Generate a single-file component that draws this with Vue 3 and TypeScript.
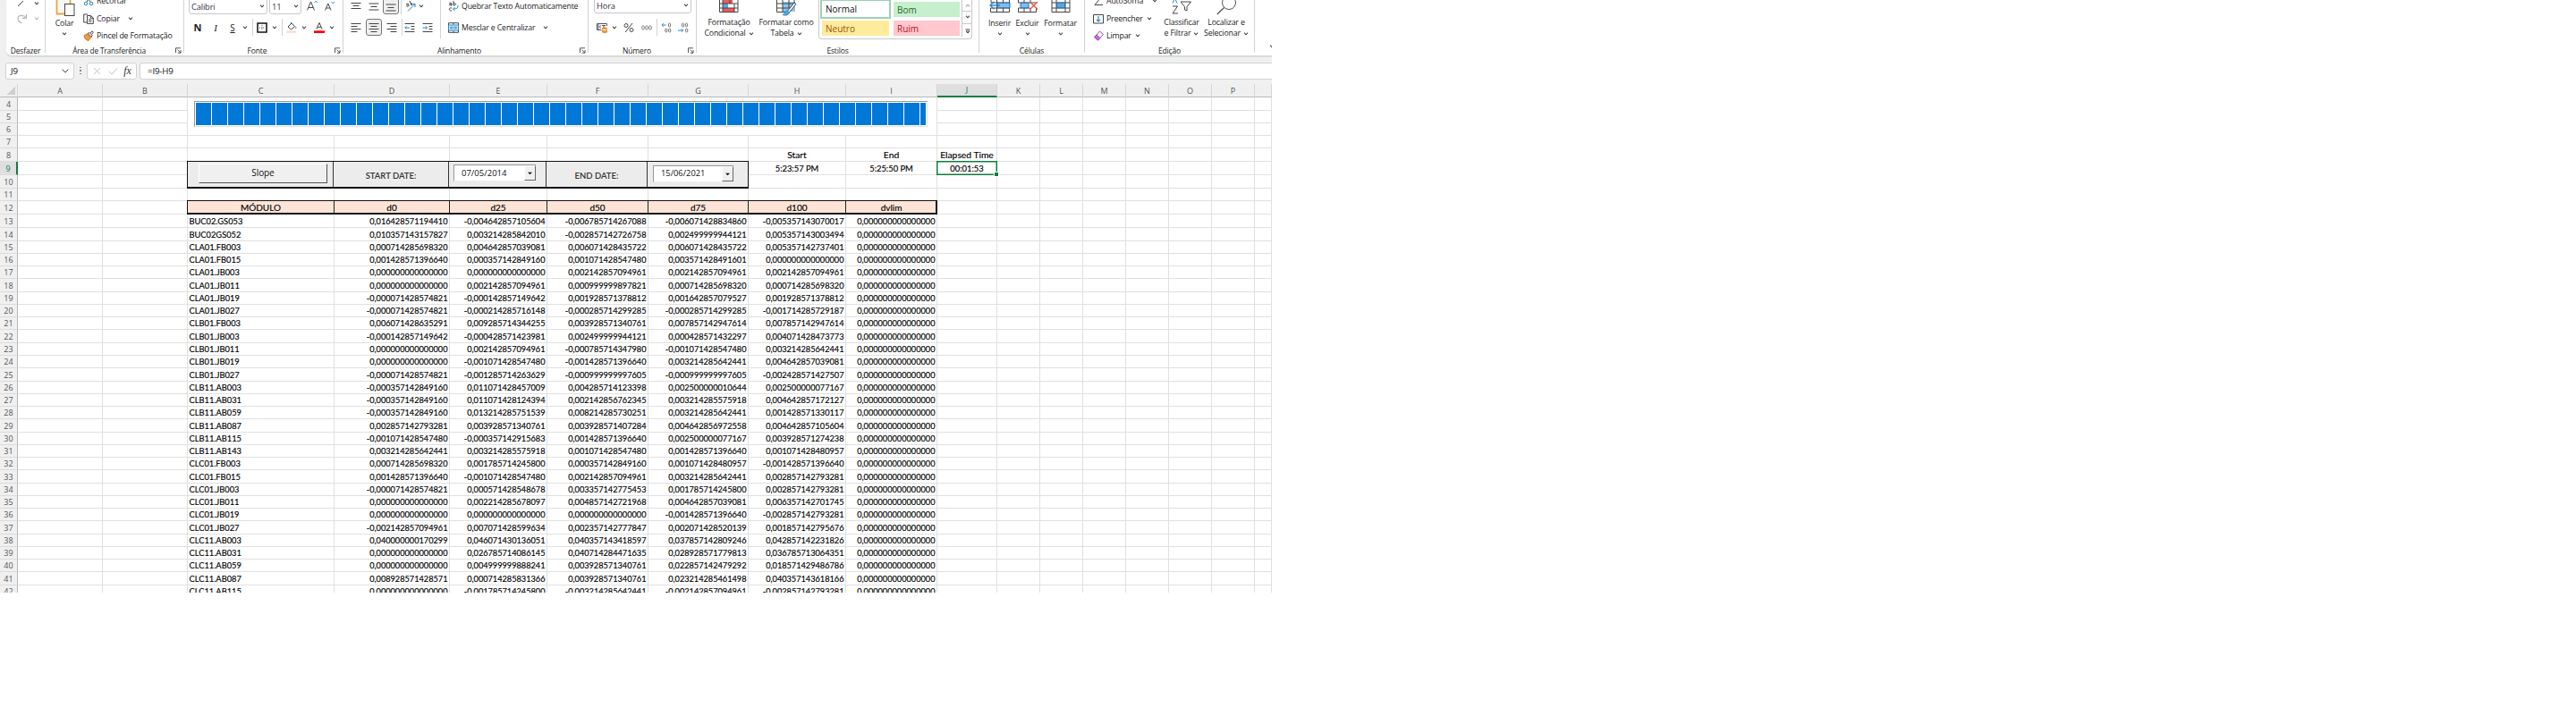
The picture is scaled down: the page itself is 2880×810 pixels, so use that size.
<script setup lang="ts">
import { h } from 'vue'

const Chevron = () => h('svg', { class: 'chevron', viewBox: '0 0 6 4' }, [h('path', { d: 'M1 .7 3 2.8 5 .7' })])
const Launcher = () => h('svg', { class: 'launcher', viewBox: '0 0 7 7' }, [h('path', { d: 'M.5 6V.8H6M2.5 2.7 6 6M6 3v3.2H2.8' })])

const columns = [
  { name: '', width: 20 },
  { name: 'A', width: 95 },
  { name: 'B', width: 95 },
  { name: 'C', width: 164 },
  { name: 'D', width: 129 },
  { name: 'E', width: 109 },
  { name: 'F', width: 113 },
  { name: 'G', width: 112 },
  { name: 'H', width: 109 },
  { name: 'I', width: 102 },
  { name: 'J', width: 67 },
  { name: 'K', width: 48 },
  { name: 'L', width: 48 },
  { name: 'M', width: 48 },
  { name: 'N', width: 48 },
  { name: 'O', width: 48 },
  { name: 'P', width: 48 },
  { name: '', width: 19 },
]

const firstRow = 4
const headHeights = [15, 14, 14, 14, 15, 15, 15, 14, 15, 15]
const rowHeights = [...headHeights]
for (let i = 1; i <= 29; i++) {
  rowHeights.push(Math.round(254.4 + i * 14.26) - Math.round(254.4 + (i - 1) * 14.26))
}
const rowNumbers = rowHeights.map((_, i) => i + firstRow)

const gridStyle = {
  gridTemplateColumns: columns.map((c) => c.width + 'px').join(' '),
  gridTemplateRows: '15px ' + rowHeights.map((v) => v + 'px').join(' '),
}

const Z = '0,000000000000000'
const data: string[][] = [
  ['BUC02.GS053', '0,016428571194410', '-0,004642857105604', '-0,006785714267088', '-0,006071428834860', '-0,005357143070017'],
  ['BUC02GS052', '0,010357143157827', '0,003214285842010', '-0,002857142726758', '0,002499999944121', '0,005357143003494'],
  ['CLA01.FB003', '0,000714285698320', '0,004642857039081', '0,006071428435722', '0,006071428435722', '0,005357142737401'],
  ['CLA01.FB015', '0,001428571396640', '0,000357142849160', '0,001071428547480', '0,003571428491601', Z],
  ['CLA01.JB003', Z, Z, '0,002142857094961', '0,002142857094961', '0,002142857094961'],
  ['CLA01.JB011', Z, '0,002142857094961', '0,000999999897821', '0,000714285698320', '0,000714285698320'],
  ['CLA01.JB019', '-0,000071428574821', '-0,000142857149642', '0,001928571378812', '0,001642857079527', '0,001928571378812'],
  ['CLA01.JB027', '-0,000071428574821', '-0,000214285716148', '-0,000285714299285', '-0,000285714299285', '-0,001714285729187'],
  ['CLB01.FB003', '0,006071428635291', '0,009285714344255', '0,003928571340761', '0,007857142947614', '0,007857142947614'],
  ['CLB01.JB003', '-0,000142857149642', '-0,000428571423981', '0,002499999944121', '0,000428571432297', '0,004071428473773'],
  ['CLB01.JB011', Z, '0,002142857094961', '-0,000785714347980', '-0,001071428547480', '0,003214285642441'],
  ['CLB01.JB019', Z, '-0,001071428547480', '-0,001428571396640', '0,003214285642441', '0,004642857039081'],
  ['CLB01.JB027', '-0,000071428574821', '-0,001285714263629', '-0,000999999997605', '-0,000999999997605', '-0,002428571427507'],
  ['CLB11.AB003', '-0,000357142849160', '0,011071428457009', '0,004285714123398', '0,002500000010644', '0,002500000077167'],
  ['CLB11.AB031', '-0,000357142849160', '0,011071428124394', '0,002142856762345', '0,003214285575918', '0,004642857172127'],
  ['CLB11.AB059', '-0,000357142849160', '0,013214285751539', '0,008214285730251', '0,003214285642441', '0,001428571330117'],
  ['CLB11.AB087', '0,002857142793281', '0,003928571340761', '0,003928571407284', '0,004642856972558', '0,004642857105604'],
  ['CLB11.AB115', '-0,001071428547480', '-0,000357142915683', '0,001428571396640', '0,002500000077167', '0,003928571274238'],
  ['CLB11.AB143', '0,003214285642441', '0,003214285575918', '0,001071428547480', '0,001428571396640', '0,001071428480957'],
  ['CLC01.FB003', '0,000714285698320', '0,001785714245800', '0,000357142849160', '0,001071428480957', '-0,001428571396640'],
  ['CLC01.FB015', '0,001428571396640', '-0,001071428547480', '0,002142857094961', '0,003214285642441', '0,002857142793281'],
  ['CLC01.JB003', '-0,000071428574821', '0,000571428548678', '0,003357142775453', '0,001785714245800', '0,002857142793281'],
  ['CLC01.JB011', Z, '0,002214285678097', '0,004857142721968', '0,004642857039081', '0,006357142701745'],
  ['CLC01.JB019', Z, Z, Z, '-0,001428571396640', '-0,002857142793281'],
  ['CLC01.JB027', '-0,002142857094961', '0,007071428599634', '0,002357142777847', '0,002071428520139', '0,001857142795676'],
  ['CLC11.AB003', '0,040000000170299', '0,046071430136051', '0,040357143418597', '0,037857142809246', '0,042857142231826'],
  ['CLC11.AB031', Z, '0,026785714086145', '0,040714284471635', '0,028928571779813', '0,036785713064351'],
  ['CLC11.AB059', Z, '0,004999999888241', '0,003928571340761', '0,022857142479292', '0,018571429486786'],
  ['CLC11.AB087', '0,008928571428571', '0,000714285831366', '0,003928571340761', '0,023214285461498', '0,040357143618166'],
  ['CLC11.AB115', Z, '-0,001785714245800', '-0,003214285642441', '-0,002142857094961', '-0,002857142793281'],
]

const headings = ['MÓDULO', 'd0', 'd25', 'd50', 'd75', 'd100', 'dvlim']
const loose: Record<string, string> = {
  '8-8': 'Start', '8-9': 'End', '8-10': 'Elapsed Time',
  '9-8': '5:23:57 PM', '9-9': '5:25:50 PM', '9-10': '00:01:53',
}

interface Cell { key: string; text: string; kind: string; style: { gridRow: number; gridColumn: number } }
const cells: Cell[] = []
for (const row of rowNumbers) {
  for (let c = 1; c < columns.length; c++) {
    if (row <= 6 && c >= 3 && c <= 9) continue
    if ((row === 9 || row === 10) && c >= 3 && c <= 7) continue
    let text = ''
    let kind = 'plain'
    if (row === 12 && c >= 3 && c <= 9) {
      text = headings[c - 3]
      kind = 'heading'
    } else if (row >= 13 && c >= 3 && c <= 9) {
      text = c === 9 ? Z : data[row - 13][c - 3]
      kind = c === 3 ? 'code' : 'number'
    } else {
      text = loose[row + '-' + c] ?? ''
      if (row === 8) kind = 'title'
    }
    cells.push({ key: row + '-' + c, text, kind, style: { gridRow: row - 2, gridColumn: c + 1 } })
  }
}
</script>

<template>
  <main class="window">
    <section class="ribbon">
      <div class="group undo">
        <div class="body undo-body">
          <svg class="i-undo" viewBox="0 0 14 8"><path d="M2 7 8 1" /></svg><Chevron />
          <svg class="i-redo" viewBox="0 0 14 12"><path d="M11.5 1v4.3H7M11.2 5C8 .8 2 2 2 6c0 2.500 2 3.500 4.500 5" /></svg><Chevron class="faded" />
        </div>
        <div class="caption"><span>Desfazer</span></div>
      </div>

      <div class="group clipboard">
        <div class="body clip-body">
          <div class="big paste">
            <svg class="i-paste" viewBox="0 0 22 20"><path d="M1.500 0v15.500h9M16.500 0v4" fill="none" stroke="#e8a33d" stroke-width="1.800" /><path d="M3 0h11v4h-4v10H3z" fill="#f7f7f7" /><rect x="10.500" y="4.500" width="10.500" height="13" fill="#fff" stroke="#444" /></svg>
            <span>Colar</span><Chevron />
          </div>
          <div class="stack">
            <div class="line"><svg class="ic" viewBox="0 0 12 12"><path d="M3.500 0 8 7M8.500 0 4 7" stroke="#444" /><circle cx="3" cy="9" r="1.800" stroke="#2b88c8" /><circle cx="9" cy="9" r="1.800" stroke="#2b88c8" /></svg><span>Recortar</span></div>
            <div class="line"><svg class="ic" viewBox="0 0 12 12"><path d="M5 10H.7V1H5M4.500 2.500h4L11.300 5v6.400H4.500zM8.300 2.500v2.800h3M6 7h3.500M6 9h3.500" stroke="#444" /></svg><span>Copiar</span><Chevron class="gap" /></div>
            <div class="line"><svg class="ic" viewBox="0 0 12 12"><path d="M1 5.500 5 4l3.500 3.500L6 11.500C3 11 1.500 9 1 5.500z" fill="#f09a3e" stroke="#d9731a" /><path d="m5 3.500 2-1 3 3-1 2zM8 3l2-2.200 1.300 1.300L9.500 4.500" fill="#fff" stroke="#444" /></svg><span>Pincel de Formatação</span></div>
          </div>
        </div>
        <div class="caption"><span>Área de Transferência</span><Launcher /></div>
      </div>

      <div class="group font">
        <div class="body">
          <div class="tools font-top">
            <div class="combo">Calibri<Chevron /></div>
            <div class="combo">11<Chevron /></div>
            <svg class="i-grow" viewBox="0 0 14 14"><path d="M1.500 12.500 5.500 3l4 9.500M3 9.500h5" stroke="#444" /><path d="m9.500 4 1.700-1.800L13 4" stroke="#2b88c8" /></svg>
            <svg class="i-grow" viewBox="0 0 14 14"><path d="M2.500 12.500 5.800 5l3.300 7.500M4 10h4" stroke="#444" /><path d="m9.500 3 1.700 1.800L13 3" stroke="#2b88c8" /></svg>
          </div>
          <div class="tools font-bottom">
            <b>N</b><i>I</i><u>S</u><Chevron /><em class="rule" />
            <svg class="ic" viewBox="0 0 12 12"><path d="M1 1h10v10H1z" stroke="#111" stroke-width="1.500" /><path d="M6 3v6M3 6h6" stroke="#666" stroke-dasharray="1 1" /></svg><Chevron /><em class="rule" />
            <svg class="ic" viewBox="0 0 12 12"><path d="m2 5 4-4 3.500 3.500L5.500 8zM5 0l1.500 2" fill="#fff" stroke="#444" /><path d="M10 4.500c1.500 1 .8 2.500.3 2.500" stroke="#2b88c8" /><path d="M.5 9.500h11v2.300H.5z" fill="#fbdcc9" stroke="none" /></svg><Chevron />
            <svg class="ic" viewBox="0 0 12 12"><path d="m2.800 7.500 3.200-7 3.200 7M4 5.300h4" stroke="#444" /><path d="M0 9.300h12v2.700H0z" fill="#f00" stroke="none" /></svg><Chevron />
          </div>
        </div>
        <div class="caption"><span>Fonte</span><Launcher /></div>
      </div>

      <div class="group align">
        <div class="body align-body">
          <div class="align-left">
            <div class="tools align-top">
              <svg class="ic" viewBox="0 0 12 12"><path d="M.5 2.500h11M2.500 5.500h7M.5 8.500h11" stroke="#444" /></svg>
              <svg class="ic" viewBox="0 0 12 12"><path d="M.5 3h11M2.500 6.500h7M.5 10h11" stroke="#444" /></svg>
              <span class="pressed"><svg class="ic" viewBox="0 0 12 12"><path d="M.5 4h11M2.500 7.500h7M.5 11h11" stroke="#444" /></svg></span>
              <em class="rule" />
              <svg class="ic" viewBox="0 0 12 12"><path d="M1 4c2-2 3-1 3 2M3.500 4C1 4 1 7 3.500 6M5 0l2 5M6 3c2-1 3 1 1 2" stroke="#444" /><path d="M3 11.500 11 3.500M11 7V3.500H7.500" stroke="#2b88c8" /></svg><Chevron />
            </div>
            <div class="tools align-bottom">
              <svg class="ic" viewBox="0 0 12 12"><path d="M.5 1.500h11M.5 4.500h7M.5 7.500h11M.5 10.500h7" stroke="#444" /></svg>
              <span class="pressed"><svg class="ic" viewBox="0 0 12 12"><path d="M.5 1.500h11M2.500 4.500h7M.5 7.500h11M2.500 10.500h7" stroke="#444" /></svg></span>
              <svg class="ic" viewBox="0 0 12 12"><path d="M.5 1.500h11M4.500 4.500h7M.5 7.500h11M4.500 10.500h7" stroke="#444" /></svg>
              <em class="rule" />
              <svg class="ic" viewBox="0 0 12 12"><path d="M.5 1.500h11M7.500 4.500h4M7.500 7.500h4M.5 10.500h11" stroke="#444" /><path d="M6 6H.8M2.500 4.300.8 6l1.700 1.700" stroke="#2b88c8" /></svg>
              <svg class="ic" viewBox="0 0 12 12"><path d="M.5 1.500h11M7.500 4.500h4M7.500 7.500h4M.5 10.500h11" stroke="#444" /><path d="M.5 6h5M4 4.300 5.700 6 4 7.700" stroke="#2b88c8" /></svg>
            </div>
          </div>
          <div class="align-right">
            <div class="line"><svg class="ic" viewBox="0 0 12 12"><path d="M1 2.500c2-1 3-.5 3 2.500M4 3.500C.5 3 .5 5.500 4 5M6 0v5M6 3c3-1.500 4 2 0 2M4 8C.5 7 .5 11.500 4 11" stroke="#444" /><path d="M11 5v1c0 2-1.500 3-5 3M7.500 7 5.500 9l2 2.300" stroke="#2b88c8" /></svg><span>Quebrar Texto Automaticamente</span></div>
            <div class="line"><svg class="ic" viewBox="0 0 12 12"><path d="M.5.7h11v10.600H.5zM6 .7v2M6 9.300v2" fill="#fff" stroke="#444" /><path d="M.5 3h11v6H.5z" fill="#cfe6f7" stroke="#2b88c8" /><path d="M2.500 6h7M4 4.500 2.500 6 4 7.500M8 4.500 9.500 6 8 7.500" stroke="#2b88c8" /></svg><span>Mesclar e Centralizar</span><Chevron class="gap" /></div>
          </div>
        </div>
        <div class="caption"><span>Alinhamento</span><Launcher /></div>
      </div>

      <div class="group num">
        <div class="body">
          <div class="combo wide">Hora<Chevron /></div>
          <div class="tools num-tools">
            <svg class="ic" viewBox="0 0 12 12"><path d="M11.500 4V1.500H.5v7h5M2 1.500v7M5 3.500c-2 1-2 2 0 3M6 3.500h4M8 3v3" stroke="#555" /><path d="M6.500 6.500c1.500-1 4-1 5 0V11c-1.500 1-4 1-5 0z" fill="#f09a3e" stroke="#d9731a" stroke-width=".7" /><path d="M6.500 8c1.500.8 4 .8 5 0" stroke="#fff" /></svg><Chevron />
            <svg class="ic" viewBox="0 0 12 12"><path d="M10 1 2 11" stroke="#444" /><circle cx="3" cy="3.500" r="2" stroke="#444" /><circle cx="9" cy="8.500" r="2" stroke="#444" /></svg>
            <svg class="ic" viewBox="0 0 12 12"><ellipse cx="2" cy="6" rx="1.400" ry="2.200" stroke="#888" /><ellipse cx="6" cy="6" rx="1.400" ry="2.200" stroke="#888" /><ellipse cx="10" cy="6" rx="1.400" ry="2.200" stroke="#888" /></svg>
            <em class="rule" />
            <svg class="ic" viewBox="0 0 12 12"><path d="M5.500 3H1M2.700 1.200 1 3l1.700 1.800" stroke="#2b88c8" /><ellipse cx="9.500" cy="3" rx="1.200" ry="2" stroke="#777" /><ellipse cx="5.800" cy="9" rx="1.200" ry="2" stroke="#777" /><ellipse cx="9.700" cy="9" rx="1.200" ry="2" stroke="#777" /></svg>
            <svg class="ic" viewBox="0 0 12 12"><path d="M0 9h5.500M4 7.200 5.700 9 4 10.800" stroke="#2b88c8" /><ellipse cx="5.500" cy="3" rx="1.200" ry="2" stroke="#777" /><ellipse cx="9.500" cy="3" rx="1.200" ry="2" stroke="#777" /><ellipse cx="9.700" cy="9" rx="1.200" ry="2" stroke="#777" /></svg>
          </div>
        </div>
        <div class="caption"><span>Número</span><Launcher /></div>
      </div>

      <div class="group styles">
        <div class="body styles-body">
          <div class="big cond">
            <svg class="i-table" viewBox="0 0 22 14"><path d="M.5 0h20v13.500H.5z" fill="#fff" stroke="none" /><path d="M4 0h11v4H4zM4 9h13v4.500H4z" fill="#f05a5a" stroke="none" /><path d="M4 4h6v5H4z" fill="#53a8e2" stroke="none" /><path d="M.5 0v13.500h20.500V0M.5 4H21M.5 9H21M4 0v13.500M12 0v4M17 4v9.500" stroke="#444" /></svg>
            <span>Formatação</span><span>Condicional <Chevron /></span>
          </div>
          <div class="big tbl">
            <svg class="i-table" viewBox="0 0 22 18"><path d="M7 2h14v11H7z" fill="#8cc5f0" stroke="none" /><path d="M.5 0v13.500h12M20 0v4M.5 4H21M.5 9H16M7 0v13.500M14 0v9" stroke="#444" /><path d="m12 13 8-10 2 1.500-8 10z" fill="#fff" stroke="#444" /><path d="M12 12c-3 0-2 4-5 4.500 4 1.500 7 0 7.500-2.500z" fill="#53a8e2" stroke="#2b88c8" /></svg>
            <span>Formatar como</span><span>Tabela <Chevron /></span>
          </div>
          <div class="gallery">
            <div class="swatch normal">Normal</div><div class="swatch good">Bom</div>
            <div class="swatch neutral">Neutro</div><div class="swatch bad">Ruim</div>
            <div class="spin"><span><Chevron class="up" /></span><span><Chevron /></span><span><svg class="i-more" viewBox="0 0 6 6"><path d="M.5 1h5M1 3l2 2 2-2z" /></svg></span></div>
          </div>
        </div>
        <div class="caption"><span>Estilos</span></div>
      </div>

      <div class="group cellsg">
        <div class="body cells-body">
          <div class="big"><svg class="i-cells" viewBox="0 0 24 14"><path d="M1.500 9v4.500h21V0M8.500 0v13.500M15.500 0v13.500M1.500 9h21M2 0v3h20" stroke="#444" /><path d="M9 3.200h14v5.600H9z" fill="#7dbdf0" stroke="#2b6fa8" /><path d="M12 6H1M5.500 1.800 1 6l4.500 4.200" stroke="#2b88c8" stroke-width="1.300" /></svg><span>Inserir</span><Chevron /></div>
          <div class="big"><svg class="i-cells" viewBox="0 0 24 14"><path d="M1.500 9v4.500h20V9M1.500 0v3h20M8 0v3M15 0v3M8 9v4.500M15 9v4.500M1.500 9h13" stroke="#444" /><path d="M4 3.200h9v5.600H4z" fill="#7dbdf0" stroke="#2b6fa8" /><path d="m14.500 2 8.500 8.500M23 2l-8.500 8.500" stroke="#e8503c" stroke-width="1.300" /></svg><span>Excluir</span><Chevron /></div>
          <div class="big"><svg class="i-cells" viewBox="0 0 24 14"><path d="M2 0v13.500h20V0M2 3h20M2 9h20M7 0v13.500M17 0v13.500" stroke="#444" /><path d="M7.500 3.200h9v5.600h-9z" fill="#53a8e2" stroke="#2b6fa8" /></svg><span>Formatar</span><Chevron /></div>
        </div>
        <div class="caption"><span>Células</span></div>
      </div>

      <div class="group edit">
        <div class="body edit-body">
          <div class="stack">
            <div class="line"><svg class="ic" viewBox="0 0 12 12"><path d="M10 0H2l4.500 5L2 10.500h9" stroke="#444" /></svg><span>AutoSoma</span><Chevron class="gap" /></div>
            <div class="line"><svg class="ic" viewBox="0 0 12 12"><path d="M.5 1.500h11v9.500H.5z" stroke="#444" /><path d="M6 3v6M3.800 6.800 6 9l2.200-2.200" stroke="#2b88c8" stroke-width="1.200" /></svg><span>Preencher</span><Chevron /></div>
            <div class="line"><svg class="ic" viewBox="0 0 12 12"><path d="m7.500 1 4 3.500-6 6.500-4-3.500z" fill="#fff" stroke="#a23cb0" /><path d="m4 5 4 3.500L5.500 11l-4-3.500z" fill="#c678d0" stroke="#a23cb0" /></svg><span>Limpar</span><Chevron /></div>
          </div>
          <div class="big sort">
            <svg class="i-find" viewBox="0 0 22 17"><path d="M1 3.500 3.500-2 6 3.500" stroke="#2b88c8" /><path d="M1 7h5.500L1 15h6" stroke="#444" /><path d="M10 2h11.500L17 7.500V12l-2.500-1V7.500z" stroke="#444" /></svg>
            <span>Classificar</span><span>e Filtrar <Chevron /></span>
          </div>
          <div class="big find">
            <svg class="i-find" viewBox="0 0 22 17"><circle cx="14" cy="3" r="7.500" stroke="#555" /><path d="M8.500 8.500.8 16" stroke="#555" stroke-width="1.300" /></svg>
            <span>Localizar e</span><span>Selecionar <Chevron /></span>
          </div>
        </div>
        <div class="caption"><span>Edição</span></div>
      </div>
      <div class="collapse"><Chevron /></div>
    </section>

    <section class="formula">
      <div class="box name"><span>J9</span><svg class="i-drop" viewBox="0 0 8 5"><path d="m.7.7 3.300 3.300L7.300.7" /></svg></div>
      <div class="dots"><i /><i /><i /></div>
      <div class="box actions">
        <svg viewBox="0 0 10 10"><path d="m1 1 8 8M9 1 1 9" stroke="#bbb" /></svg>
        <svg viewBox="0 0 12 10"><path d="m1 5.500 3.500 3.500L11 1.500" stroke="#bbb" /></svg>
        <span class="fx">fx</span>
      </div>
      <div class="box expr">=I9-H9</div>
    </section>

    <section class="sheet" :style="gridStyle">
      <div v-for="(c, i) in columns" :key="'h' + i" class="col-head" :class="{ corner: i === 0, active: c.name === 'J' }">{{ c.name }}</div>
      <div v-for="n in rowNumbers" :key="'r' + n" class="row-head" :class="{ active: n === 9 }" :style="{ gridRow: n - 2 }">{{ n }}</div>
      <div v-for="cell in cells" :key="cell.key" class="cell" :class="cell.kind" :style="cell.style">{{ cell.text }}</div>

      <div class="merged-progress">
        <div class="progress"><i v-for="n in 46" :key="n" /></div>
      </div>

      <div class="form">
        <div class="field"><button class="slope">Slope</button></div>
        <div class="field label">START DATE:</div>
        <div class="field"><div class="picker first"><span>07/05/2014</span><b><svg viewBox="0 0 6 4"><path d="M0 .5h6L3 3.500z" /></svg></b></div></div>
        <div class="field label">END DATE:</div>
        <div class="field"><div class="picker second"><span>15/06/2021</span><b><svg viewBox="0 0 6 4"><path d="M0 .5h6L3 3.500z" /></svg></b></div></div>
      </div>
      <div class="heading-frame" />
      <div class="selection"><i /></div>
    </section>
  </main>
</template>

<style>
body { margin: 0; background: #fff; }
</style>

<style scoped>
.window { width: 1422px; height: 663px; overflow: hidden; background: #f0f0f0; font-family: "Open Sans", "Noto Sans", sans-serif; font-size: 8.75px; letter-spacing: -0.15px; color: #222; }
svg { fill: none; flex: none; display: block; overflow: visible; }
.window * { box-sizing: border-box; }

.ribbon { display: flex; height: 63px; margin-left: 7px; background: #fff; border-radius: 0 0 0 6px; border-bottom: 1px solid #d6d6d6; box-shadow: 0 1px 1px #ddd; white-space: nowrap; overflow: hidden; }
.group { display: flex; flex-direction: column; flex: none; height: 59px; border-right: 1px solid #d2d2d2; }
.body { flex: none; height: 50px; }
.caption { display: flex; flex: none; height: 12px; align-items: center; justify-content: center; position: relative; font-size: 8.500px; }
.launcher { position: absolute; right: 2px; top: 3px; width: 7px; height: 7px; stroke: #444; stroke-width: .9; }
.chevron { width: 6px; height: 4px; stroke: #444; stroke-width: 1.1; }
.faded { opacity: .4; }
.ic { width: 12px; height: 12px; }
.line { display: flex; align-items: center; height: 19.500px; }
.line .ic { margin-right: 3px; }
.stack { margin-top: -8.500px; }
.big { display: flex; flex-direction: column; align-items: center; line-height: 11.700px; }
.big span { display: flex; align-items: center; gap: 3px; height: 11.700px; }
.tools { display: grid; align-items: center; justify-items: center; }
.rule { width: 1px; height: 19px; background: #d2d2d2; }
.combo { display: flex; align-items: center; justify-content: space-between; width: 100%; height: 20px; padding: 2px 2px 0; border: 1px solid #c8c8c8; border-radius: 3px; color: #3a2f45; font-size: 9.300px; }
.pressed { display: grid; place-items: center; width: 18px; height: 18.500px; background: #eee; border: 1px solid #777; border-radius: 3px; }

.undo { width: 44px; }
.undo-body { display: grid; grid-template: 8px 25px / 25px 8px; justify-content: center; align-items: center; justify-items: center; }
.i-undo { width: 14px; height: 8px; stroke: #444; }
.i-redo { width: 14px; height: 12px; stroke: #b5b5b5; stroke-width: 1.200; }

.clipboard { width: 155px; }
.clip-body { display: flex; }
.paste { width: 42px; }
.i-paste { width: 22px; height: 20px; margin-bottom: 1px; margin-left: 2px; }
.paste .chevron { margin-top: 3px; }
.gap { margin-left: 9px; }
.clipboard .caption { padding-right: 12px; font-size: 8.300px; }

.font { width: 178px; }
.font-top { grid-template-columns: 88px 36px 19px 16px; column-gap: 2px; height: 20px; margin: -4px 0 0 5px; }
.i-grow { width: 14px; height: 14px; }
.font-bottom { grid-template-columns: 20px 20px 18px 10px 7px 14px 14px 3px 18px 10px 24px 4px; height: 29px; margin: 0 0 0 5px; font-size: 10px; }
.font-bottom b { font-size: 11px; }
.font-bottom i { font-family: "Liberation Serif", serif; font-size: 11px; }
.font .caption, .align .caption { padding-right: 14px; }

.align { width: 274px; }
.align-body { display: flex; }
.align-left { width: 108px; }
.align-top { grid-template-columns: 20px 19px 20px 3px 18px 6px; justify-content: start; margin: -3px 0 0 4px; height: 19px; }
.align-bottom { grid-template-columns: 20px 20px 20px 2px 16px 24px; height: 29px; justify-content: start; margin: 0 0 0 4px; }
.align-right { padding-left: 8px; margin-top: -3px; border-left: 1px solid #d2d2d2; height: 46px; }
.align-right .line:first-child { height: 20px; }
.align-right .line:last-child { height: 28px; }

.num { width: 121px; }
.wide { width: 109px; margin: -5px 0 0 6px; }
.num-tools { grid-template-columns: 16px 12px 20px 20px 2px 19px 20px; height: 31px; justify-content: start; margin-left: 7px; }
.num .caption { padding-right: 12px; }

.styles { width: 316px; }
.styles-body { display: flex; }
.cond { width: 72px; }
.tbl { width: 56px; }
.i-table { width: 22px; height: 14px; margin-bottom: 6px; }
.tbl .i-table { height: 18px; margin-bottom: 2px; }
.gallery { display: grid; grid-template: 20px 21px / 80px 79px 12px; width: 172px; height: 44px; margin-left: 8px; border: 1px solid #c8c8c8; border-top: 0; border-radius: 0 0 4px 4px; font-size: 10px; letter-spacing: 0; }
.swatch { display: flex; align-items: center; height: 17px; margin: 2px 2px 2px 3px; padding-left: 4px; }
.normal { height: 22px; margin: -1px 0 0 1px; border: 2px solid #9bd3b3; color: #111; }
.good { background: #c6efce; color: #1d6b2a; }
.neutral { background: #ffeb9c; color: #9c5700; margin-top: 3px; }
.bad { background: #ffc7ce; color: #b3141c; margin-top: 3px; }
.spin { grid-column: 3; grid-row: 1 / 3; display: grid; grid-template-rows: 12.500px 14.500px 16px; border-left: 1px solid #c8c8c8; }
.spin span { display: grid; place-items: center; border-bottom: 1px solid #c8c8c8; }
.spin span:last-child { border: 0; }
.up { transform: rotate(180deg); opacity: .5; }
.i-more { width: 6px; height: 6px; stroke: #444; }

.cellsg { width: 118px; }
.cells-body { display: flex; padding-left: 7px; }
.cells-body .big { width: 31px; }
.cells-body .big:last-child { width: 43px; }
.i-cells { width: 24px; height: 14px; margin-bottom: 7px; }
.cells-body .chevron { margin-top: 3px; }

.edit { width: 190px; }
.edit-body { display: flex; padding-left: 9px; }
.edit .line .chevron { margin-left: 4px; }
.edit .line .gap { margin-left: 10px; }
.edit .stack { width: 77px; }
.sort { width: 44px; }
.find { width: 56px; }
.i-find { width: 22px; height: 17px; margin-bottom: 3px; }
.collapse { align-self: end; width: 20px; padding: 0 0 8px 16px; }

.formula { display: flex; align-items: center; height: 31px; padding: 1px 0 0 6px; }
.box { display: flex; align-items: center; height: 19px; background: #fff; border: 1px solid #d2d2d2; border-radius: 3px; color: #111; font-size: 9.700px; }
.name { width: 77px; padding: 0 5px; justify-content: space-between; }
.i-drop { width: 8px; height: 5px; stroke: #444; }
.dots { display: grid; gap: 2px; width: 14px; justify-items: center; }
.dots i { width: 1.500px; height: 1.500px; background: #888; }
.actions { width: 56px; justify-content: space-around; padding: 0 2px; }
.actions svg { width: 11px; height: 9px; }
.fx { font: italic 12px "Liberation Serif", serif; color: #333; }
.expr { flex: 1; margin-left: 3px; padding-left: 8px; border-right: 0; border-radius: 3px 0 0 3px; }

.sheet { display: grid; width: 1422px; background: #fff; font-family: Lato, Carlito, sans-serif; font-size: 9.200px; letter-spacing: 0; color: #000; white-space: nowrap; }
.col-head { display: grid; place-items: center; grid-row: 1; background: #f0f0f0; border-right: 1px solid #d6d6d6; border-bottom: 1px solid #b8b8b8; font-family: "Open Sans", sans-serif; font-size: 9px; color: #555; }
.col-head.active { background: #dfdfdf; color: #14774a; border-bottom: 2px solid #107c41; }
.corner { background: linear-gradient(135deg, transparent 50%, #d0d0d0 50%) 8px 3px / 9px 9px no-repeat #f0f0f0; }
.row-head { display: flex; align-items: center; justify-content: center; grid-column: 1; background: #f0f0f0; border-right: 1px solid #b8b8b8; border-bottom: 1px solid #dcdcdc; font-family: "Open Sans", sans-serif; font-size: 9px; color: #555; }
.row-head.active { background: #dfdfdf; color: #14774a; border-right: 2px solid #107c41; }
.cell { display: flex; align-items: center; justify-content: center; border-right: 1px solid #e0e0e0; border-bottom: 1px solid #e0e0e0; overflow: hidden; -webkit-text-stroke: .15px #000; }
.plain { font-size: 9.400px; }
.title { font-size: 10.300px; line-height: 13px; }
.code { justify-content: flex-start; padding-left: 1.500px; font-size: 9.300px; }
.number { justify-content: flex-end; padding-right: 1.500px; }
.heading { background: #fde4d7; border-right-color: #222; font-size: 10px; line-height: 13px; }

.merged-progress { grid-area: 2 / 4 / 5 / 11; padding: 4px 0 0 7px; border-right: 1px solid #e0e0e0; border-bottom: 1px solid #e0e0e0; }
.progress { display: flex; gap: 1px; width: 820px; height: 29px; padding: 1px; overflow: hidden; background: #fff; border: 1px solid #999; border-right-color: #e3e3e3; border-bottom-color: #e3e3e3; }
.progress i { flex: 0 0 17px; background: #0078d7; }
.progress i:last-child { flex: 0 1 6px; }

.form { grid-area: 7 / 4 / 9 / 9; display: grid; grid-template-columns: 163px 129px 109px 113px 112px; margin: -1px 0 0 -1px; border: 1px solid #111; border-bottom-width: 2px; background: #ececec; }
.field { display: flex; align-items: flex-start; border-right: 1px solid #333; }
.field:last-child { border-right: 0; }
.label { align-items: center; justify-content: center; padding-top: 3px; font-weight: 600; font-size: 9.500px; color: #333; }
.slope { width: 144px; height: 22px; margin: 2px 0 0 12px; padding: 0 0 3px; background: #f0f0f0; border: 1px solid #fff; border-right: 1px solid #555; border-bottom: 1px solid #555; font: 10px/18px "Open Sans", sans-serif; letter-spacing: -.1px; color: #111; }
.picker { display: flex; justify-content: space-between; width: 92px; height: 19px; margin: 3px 0 0 5px; background: #fff; border: 1px solid #999; border-right: 0; border-bottom: 1px solid #eee; font: 9.500px/18px "Open Sans", sans-serif; color: #111; }
.picker span { padding-left: 8px; }
.picker b { display: grid; place-items: center; width: 13px; background: #f0f0f0; border: 1px solid #fff; border-right-color: #666; border-bottom-color: #666; }
.picker svg { width: 5px; height: 4px; fill: #111; }
.second { width: 90px; margin-top: 4px; margin-left: 6px; font-size: 9.300px; line-height: 16px; }
.heading-frame { grid-area: 10 / 4 / 11 / 11; margin: -1px 0 0 -1px; border: 1px solid #111; border-bottom-width: 2px; border-right-width: 2px; }
.selection { grid-area: 7 / 11 / 8 / 12; position: relative; margin: -1px 0 0 -1px; border: 1px solid #107c41; box-shadow: inset 0 0 0 .5px #107c41; }
.selection i { position: absolute; right: -2px; bottom: -2px; width: 4px; height: 4px; background: #107c41; outline: 1px solid #fff; }
</style>
